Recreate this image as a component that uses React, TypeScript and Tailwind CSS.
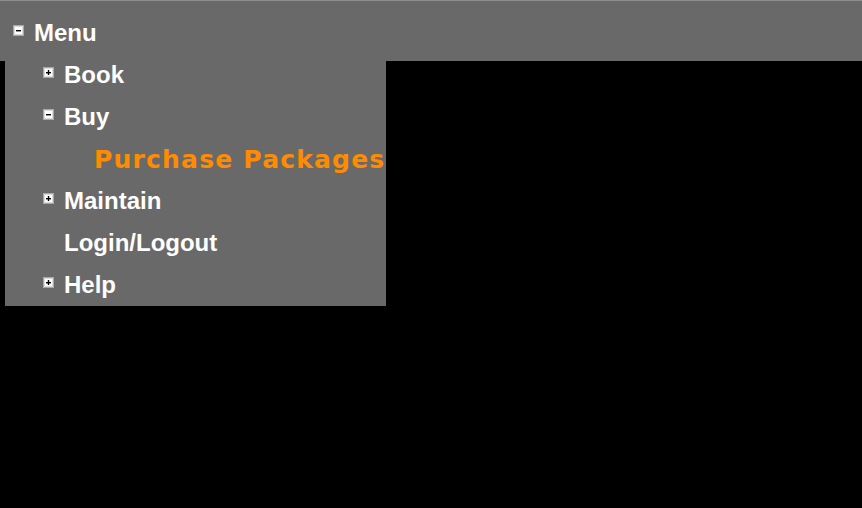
const Toggle = ({ open }: { open: boolean }) => (
  <svg width="11" height="11" viewBox="0 0 11 11" className="shrink-0">
    <rect x="0.5" y="0.5" width="10" height="10" fill="#f4f4f4" stroke="#a9a9a9" />
    <rect x="1.5" y="1.5" width="8" height="8" fill="#ffffff" stroke="#dcdcdc" />
    <rect x="3" y="5" width="5" height="1.4" fill="#000" />
    {!open && <rect x="4.8" y="3" width="1.4" height="5" fill="#000" />}
  </svg>
);

const Item = ({
  label,
  toggle,
}: {
  label: string;
  toggle?: "open" | "closed";
}) => (
  <div className="h-[42px] flex items-center pl-[38px]">
    <div className="w-[11px] mr-[10px] -mt-[5px]">
      {toggle && <Toggle open={toggle === "open"} />}
    </div>
    <span className="text-[24px] font-bold text-white leading-none">{label}</span>
  </div>
);

export default function App() {
  return (
    <div
      className="w-[862px] h-[508px] bg-black overflow-hidden"
      style={{ fontFamily: '"Liberation Sans", Arial, sans-serif' }}
    >
      <div className="h-[61px] bg-[#696969] border-t border-[#8e8e8e]">
        <div className="h-[42px] mt-[11px] flex items-center pl-[13px]">
          <div className="w-[11px] mr-[10px] -mt-[5px]">
            <Toggle open />
          </div>
          <span className="text-[24px] font-bold text-white leading-none">Menu</span>
        </div>
      </div>
      <div className="relative -mt-[7px] ml-[5px] w-[381px] bg-[#696969] overflow-hidden">
        <Item label="Book" toggle="closed" />
        <Item label="Buy" toggle="open" />
        <div className="h-[42px] flex items-center pl-[89px]">
          <span
            className="text-[25px] font-bold tracking-[1.2px] text-[#ff8c00] leading-none whitespace-nowrap"
            style={{ fontFamily: '"DejaVu Sans", Verdana, sans-serif' }}
          >
            Purchase Packages
          </span>
        </div>
        <Item label="Maintain" toggle="closed" />
        <Item label="Login/Logout" />
        <Item label="Help" toggle="closed" />
      </div>
    </div>
  );
}
